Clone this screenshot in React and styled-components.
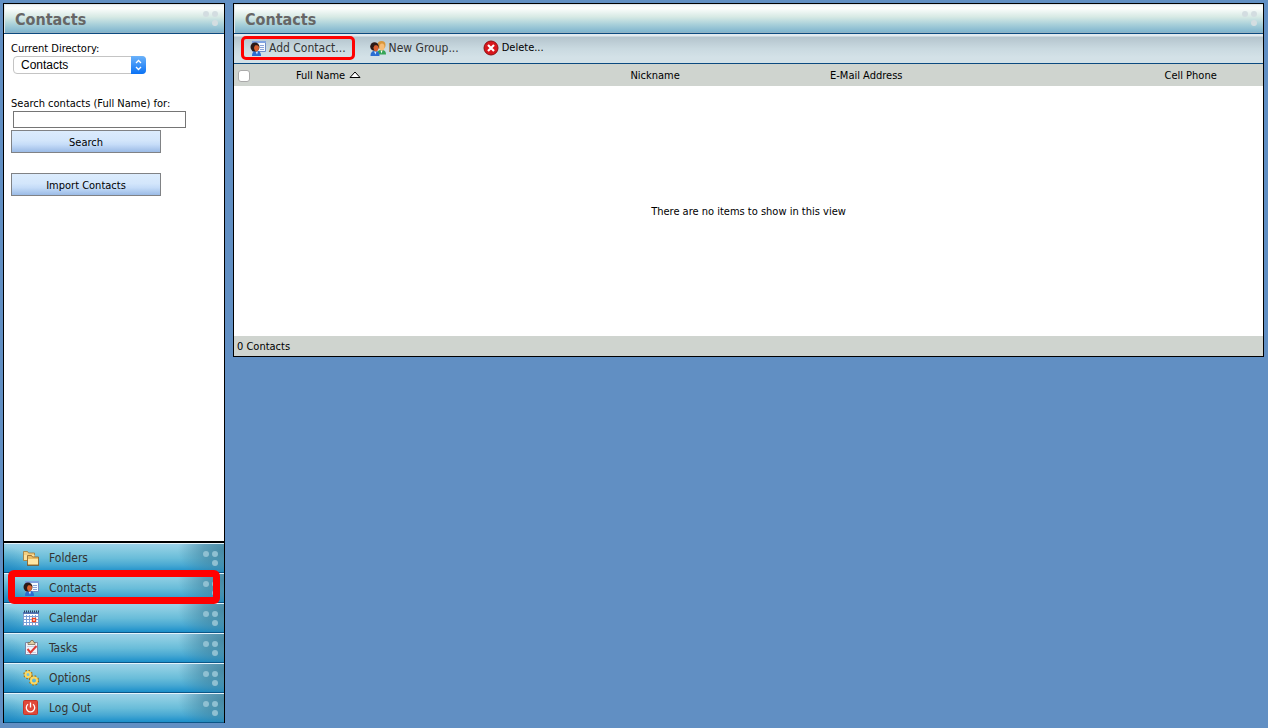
import React from "react";
import styled, { createGlobalStyle } from "styled-components";

const GlobalStyle = createGlobalStyle`
  * {
    box-sizing: border-box;
  }
  body {
    margin: 0;
    background: #618fc3;
    color: #000;
    font-family: "DejaVu Sans Condensed", "Noto Sans", sans-serif;
    font-size: 11px;
    line-height: 14px;
  }
  button, input {
    font: inherit;
    color: inherit;
  }
`;

const Page = styled.div`
  display: flex;
  align-items: flex-start;
  gap: 8px;
  min-height: 100vh;
  padding: 3px 4px 5px 3px;
`;

const Sidebar = styled.aside`
  display: flex;
  flex-direction: column;
  flex: 0 0 222px;
  align-self: stretch;
  border: 1px solid #000;
  border-bottom: none;
  background: #fff;
`;

const Main = styled.main`
  flex: 1;
  min-width: 0;
  border: 1px solid #000;
  background: #fff;
`;

const TitleBar = styled.header`
  display: flex;
  justify-content: space-between;
  height: 30px;
  padding: 0 5px 0 11px;
  border-bottom: 1px solid #0b4a80;
  background: linear-gradient(#f2f6f8 0, #fbfdfc 15%, #d6e9e4 45%, #a9d0da 70%, #83b7cf 95%, #9ab0bd 100%);
  box-shadow: inset 1px 1px 0 #dfe6ea;
`;

const Title = styled.h1`
  margin: 0;
  color: #666;
  font-size: 16px;
  font-weight: bold;
  line-height: 32px;
`;

const Dots = styled.svg`
  width: 18px;
  height: 18px;
  margin-top: ${(props) => props.$top}px;
  fill: ${(props) => props.$fill};
`;

const Filters = styled.form`
  display: flex;
  flex: 1;
  flex-direction: column;
  align-items: flex-start;
  padding: 7px;
  border-bottom: 2px solid #000;
`;

const Label = styled.label`
  display: block;
  padding-top: 1px;
`;

const SelectWrap = styled.div`
  position: relative;
  width: 133px;
  height: 18px;
  margin: 0 0 22px 2px;
`;

const Select = styled.select`
  width: 100%;
  height: 100%;
  padding: 0 20px 0 7px;
  border: 1px solid #c4c4c4;
  border-radius: 4px;
  appearance: none;
  background: #fff;
  color: #000;
  font-family: "Liberation Sans", Arial, sans-serif;
  font-size: 12px;
`;

const Stepper = styled.svg`
  position: absolute;
  top: 0;
  right: 0;
  width: 15px;
  height: 18px;
  border-radius: 0 4px 4px 0;
  background: linear-gradient(#6bb2fa, #0a72f5);
  pointer-events: none;
`;

const SearchInput = styled.input`
  width: 173px;
  height: 17px;
  margin: 0 0 2px 2px;
  padding: 0 2px;
  border: 1px solid #757575;
  background: #fff;
`;

const Button = styled.button`
  width: 150px;
  height: 23px;
  margin-bottom: 20px;
  padding: 2px 0 0;
  border: 1px solid #808285;
  background: linear-gradient(#dcecfd 0, #d3e6fb 45%, #c5dcf8 65%, #9bbbe6 100%);
`;

const NavItem = styled.a`
  position: relative;
  display: flex;
  align-items: center;
  height: 30px;
  padding: 0 5px 0 19px;
  border-top: 1px solid #e4f3fa;
  border-bottom: 1px solid #0b5687;
  background:
    radial-gradient(ellipse 28px 26px at 0 100%, #1b82bcaa 0, transparent 100%),
    radial-gradient(ellipse 46px 34px at 100% 20%, #3d7f9bdd 0, #3d7f9b99 45%, transparent 100%),
    linear-gradient(#9bd1e9 0, #83c9e0 25%, #68bcd9 52%, #49a9d3 75%, #1b8fca 100%);
  color: #333;
  font-size: 12px;
  text-decoration: none;

  & > svg:last-of-type {
    margin-left: auto;
  }
`;

const NavText = styled.span`
  margin-left: 10px;
`;

const NavMark = styled.span`
  position: absolute;
  z-index: 1;
  inset: -4px 4px -2px;
  border: 7px solid #f00;
  border-radius: 6px;
  pointer-events: none;
`;

const Toolbar = styled.div`
  display: flex;
  align-items: center;
  height: 30px;
  padding: 0 7px 1px;
  border-bottom: 1px solid #0b4a80;
  background: linear-gradient(#e2eaef 0, #e2eaef 2px, #b4c4cd 3px, #c9d9e0 50%, #d3e1e7 80%);
`;

const Tool = styled.button`
  display: flex;
  align-items: center;
  gap: 3px;
  height: 24px;
  padding: 0 6px;
  border: 3px solid ${(props) => (props.$marked ? "#f00" : "transparent")};
  border-radius: 5px;
  background: none;
  color: ${(props) => (props.$small ? "#000" : "#333")};
  font-size: ${(props) => (props.$small ? 11 : 12)}px;
  margin-right: 6px;
`;

const Table = styled.table`
  width: 100%;
  border-collapse: collapse;
  table-layout: fixed;
`;

const Th = styled.th`
  width: ${(props) => props.$width};
  height: 22px;
  padding: 2px 4px 0;
  background: #cfd4cf;
  font-weight: normal;
  text-align: left;
  white-space: nowrap;
`;

const Sort = styled.svg`
  width: 12px;
  height: 7px;
  margin-left: 4px;
  vertical-align: 1px;
`;

const Checkbox = styled.input`
  display: block;
  width: 12px;
  height: 12px;
  margin: 0;
  border: 1px solid #aaa;
  border-radius: 3px;
  appearance: none;
  background: #fff;
`;

const Empty = styled.td`
  height: 250px;
  padding: 2px 0 0;
  text-align: center;
`;

const Status = styled.footer`
  height: 20px;
  padding: 1px 3px 0;
  background: #cfd4cf;
  line-height: 20px;
`;

const Icon = ({ children }) => (
  <svg width="16" height="16" viewBox="0 0 16 16" aria-hidden="true">
    {children}
  </svg>
);

const CornerDots = ({ top, fill }) => (
  <Dots viewBox="0 0 18 18" $top={top} $fill={fill} aria-hidden="true">
    <circle cx="5" cy="5" r="3" />
    <circle cx="14" cy="5" r="3" />
    <circle cx="14" cy="14" r="3" />
  </Dots>
);

const FoldersIcon = () => (
  <Icon>
    <path d="M.5 10.500v-9h4l1 1.500h6v7.500z" fill="#f3cf81" stroke="#a57932" strokeWidth=".8" />
    <path d="M1 5h10.500v5H1z" fill="#fbe2a0" />
    <path d="M4.500 15V5.500h4L9.500 7h6v8z" fill="#e9bc63" stroke="#8a5d22" strokeWidth=".8" />
    <path d="M5 9h10v5.500H5z" fill="#ffe6a3" />
    <path d="M4 15.300h12" stroke="#7d521c" strokeWidth=".8" />
  </Icon>
);

const ContactIcon = () => (
  <Icon>
    <path d="M2.500 1.500h13v10h-13z" fill="#f6faff" stroke="#6f8cc6" />
    <path d="M2 1h14v2H2z" fill="#7fa3e0" />
    <path d="M10 5.500h4M10 7.500h4M10 9.500h4" stroke="#8aa3d6" />
    <path d="M2 16c0-3 1-5 4.500-5S11 13 11 16z" fill="#2b6ed2" />
    <path d="M5.500 11.500h2.500l-1 3z" fill="#d6efff" />
    <circle cx="5" cy="7" r="4.500" fill="#2b1a17" />
    <path d="M5 5.500c2-.5 3.500 0 4 1.500 0 2.500-1 4.500-2.500 4.500S4 9.500 4 7.500z" fill="#d9602f" />
  </Icon>
);

const CalendarIcon = () => (
  <Icon>
    <path d="M.5 2.500h15v13H.5z" fill="#fff" stroke="#7f9dce" />
    <path d="M0 2h16v2H0z" fill="#5478b5" />
    <path d="M1 1.500h15" stroke="#293c62" strokeWidth="2" strokeDasharray="1 1" />
    <path d="M1 6.500h14M1 9.500h14M1 12.500h14M3.500 5v10M6.500 5v10M9.500 5v10M12.500 5v10" stroke="#7ba0d8" />
    <path d="M9.500 8.500h3v3h-3z" fill="#fff" stroke="#f04421" strokeWidth="1.400" />
  </Icon>
);

const TasksIcon = () => (
  <Icon>
    <path d="M2.500 2.500h12v12h-12z" fill="#f1f3fa" stroke="#7887a7" />
    <path d="M5 4.500V2.500h2l1-2h2l1 2h1v2z" fill="#e0cfa5" stroke="#746348" strokeWidth=".7" />
    <path d="M4 6.500h9M4 12.500h9" stroke="#c6cfe2" />
    <path d="M4.500 9l3 3.500 6-6.500" fill="none" stroke="#dc3b35" strokeWidth="2" />
  </Icon>
);

const OptionsIcon = () => (
  <Icon>
    <circle cx="5" cy="4.500" r="3.700" fill="none" stroke="#a87410" strokeWidth="2" strokeDasharray="1.500 1.406" />
    <circle cx="5" cy="4.500" r="2.500" fill="none" stroke="#ffd95e" strokeWidth="2" />
    <circle cx="11" cy="10.500" r="4.200" fill="none" stroke="#a87410" strokeWidth="2" strokeDasharray="1.700 1.599" />
    <circle cx="11" cy="10.500" r="3" fill="none" stroke="#ffd95e" strokeWidth="2" />
  </Icon>
);

const LogOutIcon = () => (
  <Icon>
    <rect x=".5" y=".5" width="14" height="14" rx="1" fill="#e04a3a" stroke="#c4362b" />
    <path d="M5 4.300a4.200 4.200 0 1 0 5 0M7.500 2.500v5" fill="none" stroke="#fff" strokeWidth="1.300" />
  </Icon>
);

const GroupIcon = () => (
  <Icon>
    <path d="M7 14.500c0-3 1-4.500 4.500-4.500s4.500 2 4.500 4.500z" fill="#35a557" />
    <path d="M10.500 10.500h2l-1 3z" fill="#fff" />
    <circle cx="11.500" cy="5" r="4" fill="#d8963a" />
    <ellipse cx="12" cy="7" rx="2.500" ry="3.500" fill="#f7bc74" />
    <path d="M.5 16c0-3 1-5 4.500-5s4.500 2 4.500 5z" fill="#2b6ed2" />
    <path d="M4 11.500h2.500l-1 3z" fill="#d6efff" />
    <circle cx="4.500" cy="6.500" r="4.300" fill="#2b1a17" />
    <path d="M4.500 5.500c2-.5 3.500 0 4 1.500 0 2.500-1 4.500-2.500 4.500S3.500 9.500 3.500 7.500z" fill="#d9602f" />
  </Icon>
);

const DeleteIcon = () => (
  <Icon>
    <circle cx="8" cy="8" r="7" fill="#d8161c" stroke="#8c1012" />
    <path d="M5 5l6 6M11 5l-6 6" stroke="#fff" strokeWidth="2.200" />
  </Icon>
);

const navItems = [
  { name: "Folders", icon: FoldersIcon },
  { name: "Contacts", icon: ContactIcon, active: true },
  { name: "Calendar", icon: CalendarIcon },
  { name: "Tasks", icon: TasksIcon },
  { name: "Options", icon: OptionsIcon },
  { name: "Log Out", icon: LogOutIcon },
];

const App = () => {
  return (
    <Page>
      <GlobalStyle />
      <Sidebar>
        <TitleBar>
          <Title as="h2">Contacts</Title>
          <CornerDots top={5} fill="#d3dde1" />
        </TitleBar>
        <Filters onSubmit={(e) => e.preventDefault()}>
          <Label htmlFor="directory">Current Directory:</Label>
          <SelectWrap>
            <Select id="directory">
              <option>Contacts</option>
            </Select>
            <Stepper viewBox="0 0 15 18" aria-hidden="true">
              <path d="M5 7l2.500-2.500L10 7M5 11l2.500 2.500L10 11" fill="none" stroke="#fff" strokeWidth="1.300" />
            </Stepper>
          </SelectWrap>
          <Label htmlFor="search">Search contacts (Full Name) for:</Label>
          <SearchInput id="search" type="text" />
          <Button type="submit">Search</Button>
          <Button type="button">Import Contacts</Button>
        </Filters>
        <nav>
          {navItems.map((item) => (
            <NavItem href="#" key={item.name}>
              <item.icon />
              <NavText>{item.name}</NavText>
              <CornerDots top={0} fill="#8fc0d2" />
              {item.active && <NavMark />}
            </NavItem>
          ))}
        </nav>
      </Sidebar>
      <Main>
        <TitleBar>
          <Title>Contacts</Title>
          <CornerDots top={5} fill="#d3dde1" />
        </TitleBar>
        <Toolbar>
          <Tool $marked>
            <ContactIcon />
            Add Contact...
          </Tool>
          <Tool>
            <GroupIcon />
            New Group...
          </Tool>
          <Tool $small>
            <DeleteIcon />
            Delete...
          </Tool>
        </Toolbar>
        <Table>
          <thead>
            <tr>
              <Th $width="58px">
                <Checkbox type="checkbox" aria-label="Select all contacts" />
              </Th>
              <Th $width="32.5%">
                Full Name
                <Sort viewBox="0 0 12 7" aria-hidden="true">
                  <path d="M1 6.500L6 1l5 5.500z" fill="#fff" stroke="#000" />
                </Sort>
              </Th>
              <Th $width="19.4%">Nickname</Th>
              <Th $width="32.5%">E-Mail Address</Th>
              <Th>Cell Phone</Th>
            </tr>
          </thead>
          <tbody>
            <tr>
              <Empty colSpan={5}>There are no items to show in this view</Empty>
            </tr>
          </tbody>
        </Table>
        <Status>0 Contacts</Status>
      </Main>
    </Page>
  );
};

export default App;
